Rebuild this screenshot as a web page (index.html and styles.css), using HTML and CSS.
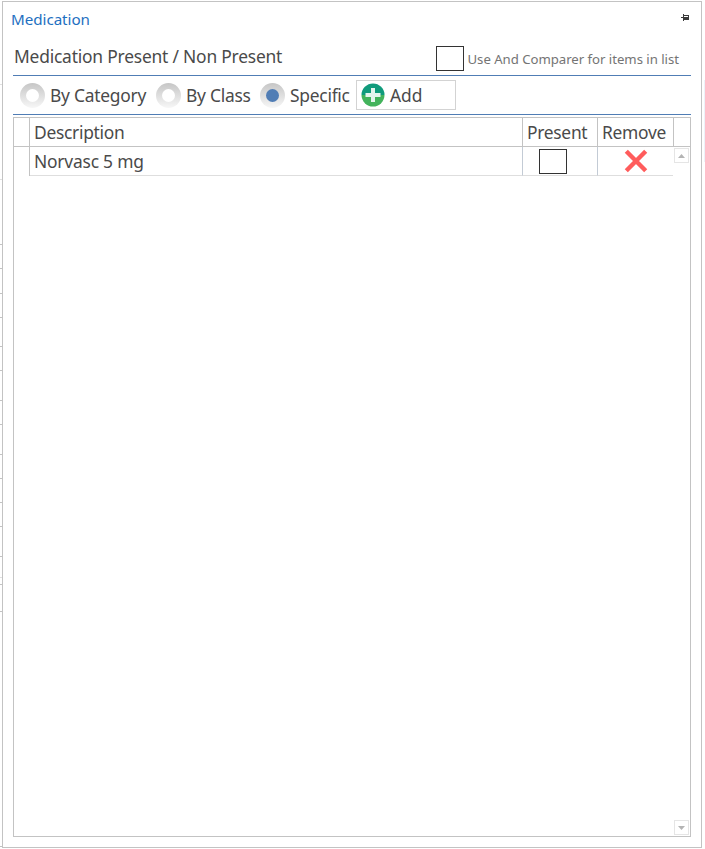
FILE: index.html
```html
<!DOCTYPE html>
<html lang="en">
<head>
<meta charset="utf-8">
<title>Medication</title>
<link rel="stylesheet" href="styles.css">
</head>
<body>
<div class="window">
  <svg class="edge" width="2" height="849" shape-rendering="crispEdges">
    <path stroke="#e0e0e0" d="M0 84.5h2M0 179.5h2M0 577.5h2"/>
    <path stroke="#c3c3c3" d="M0 244.5h2M0 268.5h2M0 293.5h2M0 317.5h2M0 346.5h2M0 370.5h2M0 400.5h2M0 424.5h2M0 454.5h2M0 478.5h2M0 502.5h2M0 526.5h2M0 556.5h2M0 584.5h2M0 611.5h2M0 846.5h2"/>
  </svg>
  <main class="panel">
    <header class="titlebar">
      <span class="caption">Medication</span>
      <svg class="pin" width="8" height="7" shape-rendering="crispEdges" fill="#3b3b3b"><path fill-rule="evenodd" d="M0 3h2V0h1v1h5v5H3v1H2V4H0zM3 2v1h4V2z"/></svg>
    </header>
    <div class="heading">
      <span class="heading-text">Medication Present / Non Present</span>
      <label class="compare"><span class="box"></span><span class="compare-text">Use And Comparer for items in list</span></label>
    </div>
    <div class="filters">
      <div class="option category"><span class="radio"></span><span class="label">By Category</span></div>
      <div class="option class"><span class="radio"></span><span class="label">By Class</span></div>
      <div class="option specific"><span class="radio checked"></span><span class="label">Specific</span></div>
      <button class="add">
        <svg width="24" height="24" viewBox="0 0 24 24"><path fill="#109b7c" d="M.5 12a11.5 11.5 0 0 1 23 0z"/><path fill="#43b35c" d="M.5 12a11.5 11.5 0 0 0 23 0z"/><path fill="#e5f5ee" d="M10 5h4v5h5.500v4H14v5h-4v-5H4.500v-4H10z"/></svg>
        <span>Add</span>
      </button>
    </div>
    <section class="table">
      <div class="row head">
        <div class="cell"></div>
        <div class="cell"><span class="description">Description</span></div>
        <div class="cell"><span class="present">Present</span></div>
        <div class="cell"><span class="remove">Remove</span></div>
        <div class="cell"></div>
      </div>
      <div class="content">
        <div class="row item">
          <div class="cell"></div>
          <div class="cell"><span class="drug">Norvasc 5 mg</span></div>
          <div class="cell"><span class="box"></span></div>
          <div class="cell"><svg class="cross" width="24" height="24" viewBox="0 0 24 24"><path d="M2.300 2.300l19.400 19.400M21.700 2.300L2.300 21.700" stroke="#ff5c5c" stroke-width="4.400"/></svg></div>
        </div>
        <div class="scrollbar">
          <div class="arrow"><svg width="7" height="4"><path fill="#b4b4b4" d="M0 4L3.5 0 7 4z"/></svg></div>
          <div class="arrow"><svg width="7" height="4"><path fill="#b4b4b4" d="M0 0h7L3.5 4z"/></svg></div>
        </div>
      </div>
    </section>
  </main>
  <div class="right-edge"></div>
</div>
</body>
</html>
```

FILE: styles.css
```css
* { box-sizing: border-box; }
body { margin: 0; background: #fff; color: #4a4a4a; font-family: "Noto Sans", sans-serif; font-size: 17.4px; overflow: hidden; }
svg { display: block; flex: none; }
span { white-space: nowrap; }
.window { display: flex; width: 705px; height: 849px; }
.panel { width: 700px; height: 847px; margin-top: 1px; border: 1px solid #c3c3c3; padding: 0 10px; }
.titlebar { display: flex; justify-content: space-between; height: 36px; padding-top: 6px; }
.caption { color: #1e70c1; font-size: 15.2px; line-height: 23px; margin-left: -2px; letter-spacing: -.05px; }
.pin { margin: 6px 2px 0 0; }
.heading { display: flex; justify-content: space-between; height: 38px; border-bottom: 1px solid #507db5; }
.heading-text { line-height: 37px; letter-spacing: -.2px; margin-left: 1px; }
.compare { display: flex; gap: 4px; padding: 8px 12px 0 0; }
.box { display: block; width: 28px; height: 25px; border: 1px solid #333; flex: none; }
.compare-text { font-size: 13.2px; line-height: 26px; color: #747474; letter-spacing: -.03px; }
.filters { display: flex; align-items: flex-start; height: 39px; padding: 4px 0 0 7px; border-bottom: 1px solid #507db5; }
.option { display: flex; align-items: center; height: 30px; }
.category { width: 136px; }
.class { width: 104px; }
.specific { width: 96px; }
.radio { display: grid; place-items: center; width: 25px; height: 25px; border-radius: 50%; background: linear-gradient(#c6c6c6, #f7f7f7); margin-right: 5px; flex: none; }
.radio::after { content: ""; width: 13px; height: 13px; border-radius: 50%; background: #fff; }
.radio.checked::after { background: #507db5; }
.label { letter-spacing: -.25px; }
.add { display: flex; align-items: center; gap: 5px; width: 100px; height: 30px; padding: 0 4px; border: 1px solid #d3d3d3; background: #fff; color: #4a4a4a; font: inherit; }
.table { margin-top: 2px; height: 720px; border: 1px solid #c3c3c3; }
.row { display: grid; height: 29px; }
.head { grid-template-columns: 16px 493px 75px 76px 16px; border-bottom: 1px solid #c3c3c3; }
.item { grid-template-columns: 16px 493px 75px 75px; width: 659px; }
.cell { display: flex; align-items: center; border-right: 1px solid #c3c3c3; padding-left: 4px; letter-spacing: -.28px; }
.cell:last-child { border-right: 0; }
.content { display: flex; justify-content: space-between; height: 689px; }
.item .cell + .cell { border-bottom: 1px solid #dedede; border-right-color: #c3cbd5; }
.item .cell:first-child { border-right-color: #c3c3c3; }
.item .cell:last-child { border-right: 0; }
.item .box { margin-left: 12px; }
.cross { margin-left: 22px; }
.drug { letter-spacing: -.2px; }
.scrollbar { display: flex; flex-direction: column; justify-content: space-between; padding: 1px 1px 1px 0; }
.arrow { display: grid; place-items: center; width: 15px; height: 15px; border: 1px solid #e5e5e5; }
.right-edge { width: 1px; height: 82px; margin: 80px 0 0 2px; background: #edf2f8; }
```
